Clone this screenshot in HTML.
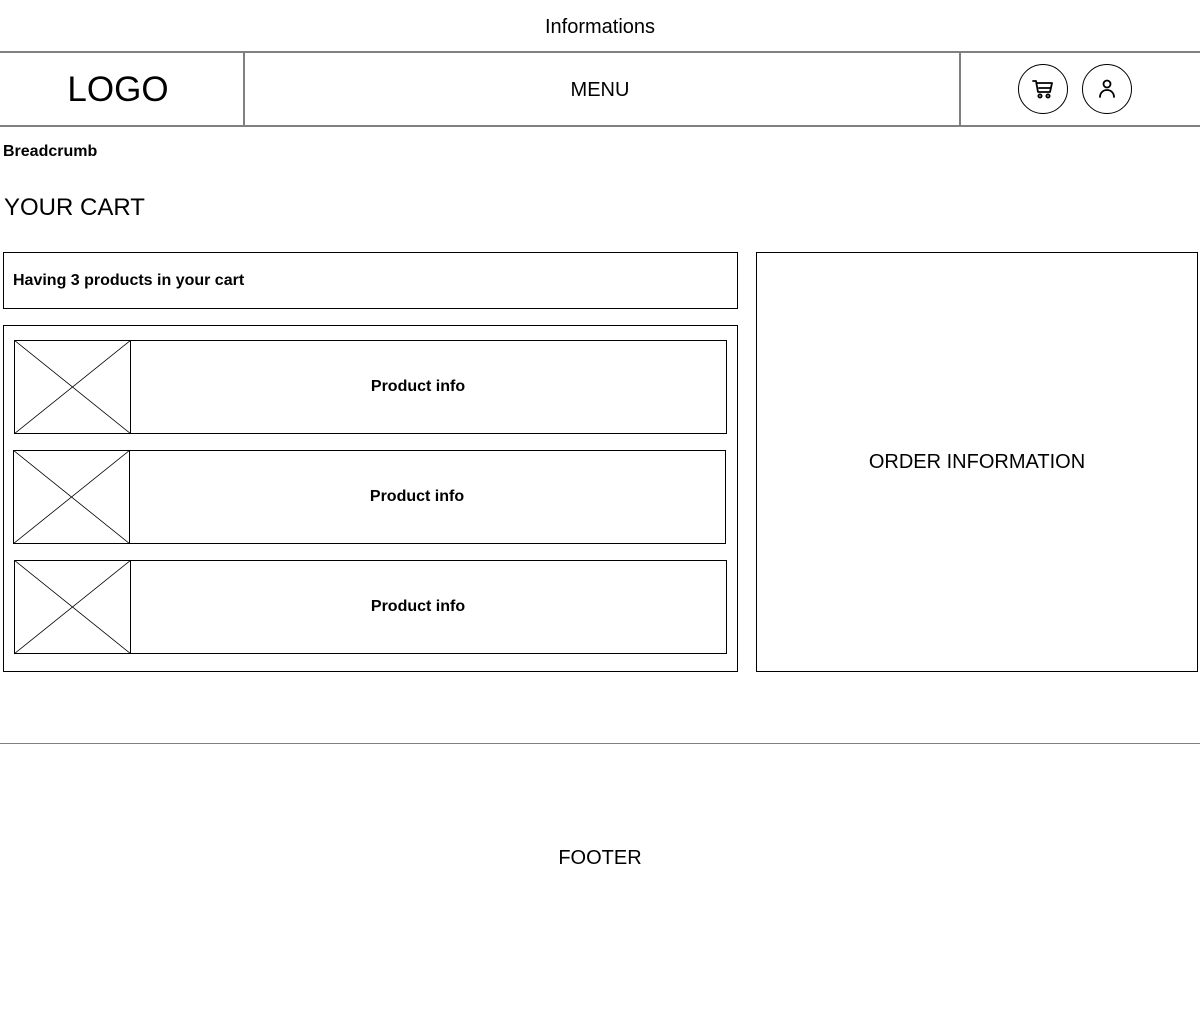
<!DOCTYPE html>
<html><head><style>
body{margin:0;width:1200px;height:1009px;position:relative;background:#fff;font-family:"Liberation Sans",Arial,sans-serif;color:#000;overflow:hidden}
.a{position:absolute;box-sizing:border-box}
.b{border:1px solid #000}
.t{position:absolute;white-space:nowrap}
.c{display:flex;align-items:center;justify-content:center}
</style></head><body>
<div class="t" style="left:0;width:1200px;top:16px;text-align:center;font-size:20px">Informations</div>
<div class="a" style="left:0;top:51px;width:1200px;height:2px;background:#808080"></div>
<div class="a" style="left:0;top:125px;width:1200px;height:2px;background:#808080"></div>
<div class="a" style="left:243px;top:51px;width:2px;height:76px;background:#808080"></div>
<div class="a" style="left:959px;top:51px;width:2px;height:76px;background:#808080"></div>
<div class="t" style="left:0;width:236px;top:70px;text-align:center;font-size:35px">LOGO</div>
<div class="t" style="left:245px;width:710px;top:79px;text-align:center;font-size:20px">MENU</div>
<div class="a c" style="left:1018px;top:64px;width:50px;height:50px;border:1px solid #000;border-radius:50%">
<svg width="24" height="24" viewBox="0 0 24 24" fill="none" stroke="#000" stroke-width="1.8" stroke-linejoin="round" stroke-linecap="round"><path d="M2 4h3l2 11h12l2-9H6"/><path d="M8 11h11"/><circle cx="9" cy="19" r="1.6"/><circle cx="17" cy="19" r="1.6"/></svg></div>
<div class="a c" style="left:1082px;top:64px;width:50px;height:50px;border:1px solid #000;border-radius:50%">
<svg width="24" height="24" viewBox="0 0 24 24" fill="none" stroke="#000" stroke-width="1.8" stroke-linecap="round"><circle cx="12" cy="7" r="3.5"/><path d="M5 20c0-4 3-7 7-7s7 3 7 7"/></svg></div>
<div class="t" style="left:3px;top:143px;font-size:16px;font-weight:bold">Breadcrumb</div>
<div class="t" style="left:4px;top:194px;font-size:24px">YOUR CART</div>
<div class="a b" style="left:3px;top:252px;width:735px;height:57px"></div>
<div class="t" style="left:13px;top:272px;font-size:16px;font-weight:bold">Having 3 products in your cart</div>
<div class="a b" style="left:3px;top:325px;width:735px;height:347px"></div>
<div class="a b c" style="left:756px;top:252px;width:442px;height:420px;font-size:20px">ORDER INFORMATION</div>

<div class="a b" style="left:14px;top:340px;width:713px;height:94px"><svg class="a" style="left:-1px;top:-1px" width="117" height="94"><rect x="0.5" y="0.5" width="116" height="93" fill="none" stroke="#000"/><path d="M0 0L117 94M117 0L0 94" stroke="#000" stroke-width="0.8"/></svg><div class="t" style="left:0;width:806px;top:37px;text-align:center;font-size:16px;font-weight:bold">Product info</div></div>
<div class="a b" style="left:13px;top:450px;width:713px;height:94px"><svg class="a" style="left:-1px;top:-1px" width="117" height="94"><rect x="0.5" y="0.5" width="116" height="93" fill="none" stroke="#000"/><path d="M0 0L117 94M117 0L0 94" stroke="#000" stroke-width="0.8"/></svg><div class="t" style="left:0;width:806px;top:37px;text-align:center;font-size:16px;font-weight:bold">Product info</div></div>
<div class="a b" style="left:14px;top:560px;width:713px;height:94px"><svg class="a" style="left:-1px;top:-1px" width="117" height="94"><rect x="0.5" y="0.5" width="116" height="93" fill="none" stroke="#000"/><path d="M0 0L117 94M117 0L0 94" stroke="#000" stroke-width="0.8"/></svg><div class="t" style="left:0;width:806px;top:37px;text-align:center;font-size:16px;font-weight:bold">Product info</div></div>

<div class="a" style="left:0;top:743px;width:1200px;height:1px;background:#808080"></div>
<div class="t" style="left:0;width:1200px;top:847px;text-align:center;font-size:20px">FOOTER</div>
</body></html>
